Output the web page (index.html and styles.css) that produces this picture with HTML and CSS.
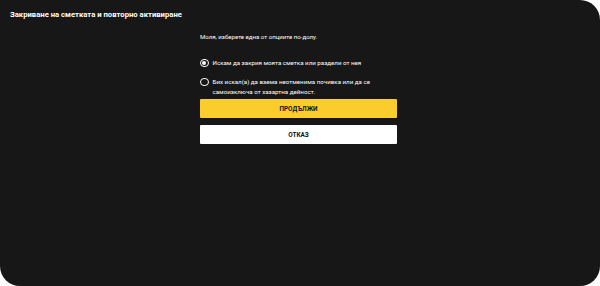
FILE: index.html
```html
<!DOCTYPE html>
<html lang="bg">
<head>
    <meta charset="UTF-8">
    <meta name="viewport" content="width=device-width, initial-scale=1.0">
    <title>Закриване на сметката</title>
    <link rel="stylesheet" href="styles.css">
</head>
<body>
    <div class="dialog">
        <h1 class="dialog-title">Закриване на сметката и повторно активиране</h1>

        <div class="dialog-body">
            <p class="intro">Моля, изберете една от опциите по-долу.</p>

            <form id="close-form">
                <label class="option">
                    <input type="radio" name="close_type" value="close" checked>
                    <span class="radio-mark"></span>
                    <span class="option-text">Искам да закрия моята сметка или раздели от нея</span>
                </label>
                <label class="option">
                    <input type="radio" name="close_type" value="exclude">
                    <span class="radio-mark"></span>
                    <span class="option-text">Бих искал(а) да взема неотменима почивка или да се самоизключа от хазартна дейност.</span>
                </label>

                <button type="submit" class="btn btn-primary">ПРОДЪЛЖИ</button>
                <button type="button" class="btn btn-secondary">ОТКАЗ</button>
            </form>
        </div>
    </div>
</body>
</html>
```

FILE: styles.css
```css
/* General Styles */
body {
    margin: 0;
    background-color: #fff;
    font-family: Roboto, "Liberation Sans", Arial, sans-serif;
}

.dialog {
    width: 600px;
    height: 286px;
    box-sizing: border-box;
    background-color: #171717;
    border-radius: 0 20px 20px 20px;
    color: #fff;
    overflow: hidden;
}

.dialog-title {
    margin: 0;
    padding: 9px 10px 0;
    font-size: 7.7px;
    line-height: 11px;
    font-weight: bold;
}

.dialog-body {
    width: 197px;
    margin-left: 200px;
    padding-top: 12px;
}

.intro {
    margin: 0 0 16px;
    font-size: 6.1px;
    line-height: 10px;
}

.option {
    display: flex;
    align-items: flex-start;
    gap: 4px;
    margin-bottom: 9px;
    font-size: 6.2px;
    line-height: 10px;
    cursor: pointer;
}

.option:last-of-type {
    margin-bottom: 0;
}

.option input {
    display: none;
}

.radio-mark {
    flex: none;
    width: 6.5px;
    height: 6.5px;
    margin-top: 0.5px;
    border: 1.4px solid #fff;
    border-radius: 50%;
    position: relative;
}

.option input:checked + .radio-mark::after {
    content: "";
    position: absolute;
    top: 1.25px;
    left: 1.25px;
    width: 4px;
    height: 4px;
    border-radius: 50%;
    background-color: #fff;
}

.btn {
    display: block;
    width: 100%;
    height: 19px;
    padding: 0;
    border: none;
    border-radius: 1px;
    font-family: inherit;
    font-size: 6.4px;
    font-weight: bold;
    color: #111;
    cursor: pointer;
}

.btn-primary {
    margin-top: 2px;
    background-color: #fbcd2c;
}

.btn-secondary {
    margin-top: 7px;
    background-color: #fff;
}
```
